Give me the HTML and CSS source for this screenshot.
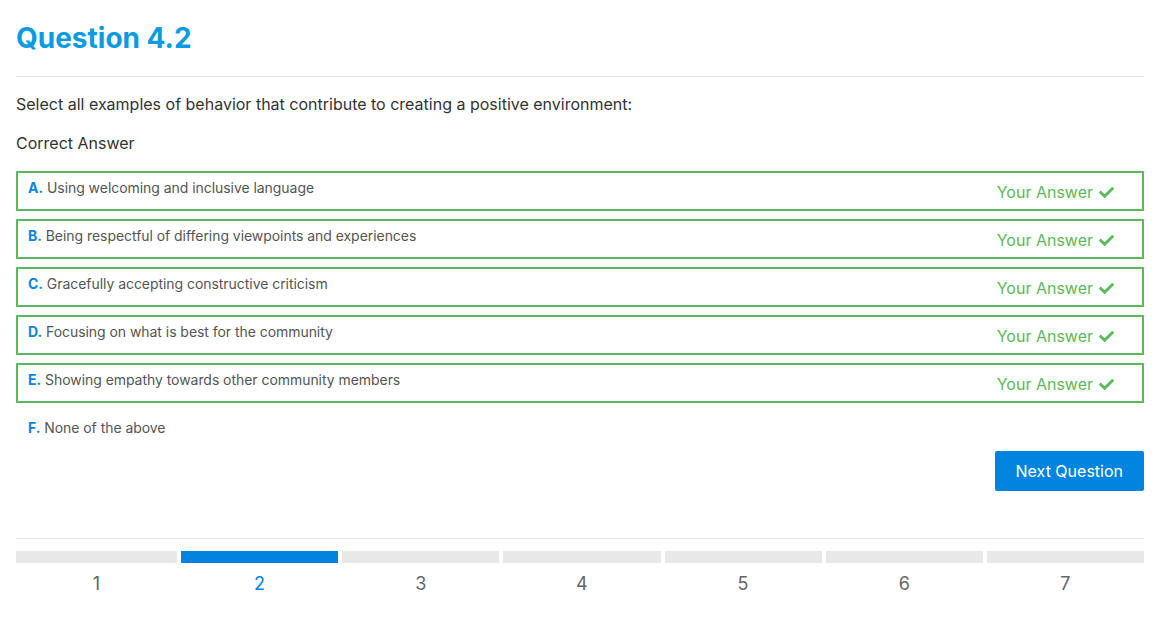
FILE: index.html
```html
<!DOCTYPE html>
<html lang="en">
<head>
<meta charset="utf-8">
<title>Question 4.2</title>
<link rel="stylesheet" href="styles.css">
</head>
<body>
<main class="page">
  <h1 class="title">Question 4.2</h1>
  <hr class="rule">
  <p class="prompt">Select all examples of behavior that contribute to creating a positive environment:</p>
  <p class="status">Correct Answer</p>
  <ul class="options">
    <li class="option selected"><span class="label"><b class="letter">A.</b> Using welcoming and inclusive language</span><span class="yours">Your Answer <svg class="check" viewBox="0 0 512 512" width="15" height="15"><path fill="currentColor" d="M173.9 439.4l-166.4-166.4c-10-10-10-26.2 0-36.2l36.2-36.2c10-10 26.2-10 36.2 0L192 312.7 432.1 72.6c10-10 26.2-10 36.2 0l36.2 36.2c10 10 10 26.2 0 36.2L210.1 439.4c-10 10-26.2 10-36.2 0z"/></svg></span></li>
    <li class="option selected"><span class="label"><b class="letter">B.</b> Being respectful of differing viewpoints and experiences</span><span class="yours">Your Answer <svg class="check" viewBox="0 0 512 512" width="15" height="15"><path fill="currentColor" d="M173.9 439.4l-166.4-166.4c-10-10-10-26.2 0-36.2l36.2-36.2c10-10 26.2-10 36.2 0L192 312.7 432.1 72.6c10-10 26.2-10 36.2 0l36.2 36.2c10 10 10 26.2 0 36.2L210.1 439.4c-10 10-26.2 10-36.2 0z"/></svg></span></li>
    <li class="option selected"><span class="label"><b class="letter">C.</b> Gracefully accepting constructive criticism</span><span class="yours">Your Answer <svg class="check" viewBox="0 0 512 512" width="15" height="15"><path fill="currentColor" d="M173.9 439.4l-166.4-166.4c-10-10-10-26.2 0-36.2l36.2-36.2c10-10 26.2-10 36.2 0L192 312.7 432.1 72.6c10-10 26.2-10 36.2 0l36.2 36.2c10 10 10 26.2 0 36.2L210.1 439.4c-10 10-26.2 10-36.2 0z"/></svg></span></li>
    <li class="option selected"><span class="label"><b class="letter">D.</b> Focusing on what is best for the community</span><span class="yours">Your Answer <svg class="check" viewBox="0 0 512 512" width="15" height="15"><path fill="currentColor" d="M173.9 439.4l-166.4-166.4c-10-10-10-26.2 0-36.2l36.2-36.2c10-10 26.2-10 36.2 0L192 312.7 432.1 72.6c10-10 26.2-10 36.2 0l36.2 36.2c10 10 10 26.2 0 36.2L210.1 439.4c-10 10-26.2 10-36.2 0z"/></svg></span></li>
    <li class="option selected"><span class="label"><b class="letter">E.</b> Showing empathy towards other community members</span><span class="yours">Your Answer <svg class="check" viewBox="0 0 512 512" width="15" height="15"><path fill="currentColor" d="M173.9 439.4l-166.4-166.4c-10-10-10-26.2 0-36.2l36.2-36.2c10-10 26.2-10 36.2 0L192 312.7 432.1 72.6c10-10 26.2-10 36.2 0l36.2 36.2c10 10 10 26.2 0 36.2L210.1 439.4c-10 10-26.2 10-36.2 0z"/></svg></span></li>
    <li class="option"><span class="label"><b class="letter">F.</b> None of the above</span></li>
  </ul>
  <div class="actions">
    <button class="next" type="button">Next Question</button>
  </div>
  <hr class="rule rule-bottom">
  <ol class="steps">
    <li class="step"><span class="bar"></span><span class="num">1</span></li>
    <li class="step active"><span class="bar"></span><span class="num">2</span></li>
    <li class="step"><span class="bar"></span><span class="num">3</span></li>
    <li class="step"><span class="bar"></span><span class="num">4</span></li>
    <li class="step"><span class="bar"></span><span class="num">5</span></li>
    <li class="step"><span class="bar"></span><span class="num">6</span></li>
    <li class="step"><span class="bar"></span><span class="num">7</span></li>
  </ol>
</main>
</body>
</html>
```

FILE: styles.css
```css
* { box-sizing: border-box; }

html, body {
  margin: 0;
  padding: 0;
  background: #ffffff;
}

body {
  font-family: Inter, "Noto Sans", "Liberation Sans", sans-serif;
  color: #333333;
}

.page {
  width: 1128px;
  margin-left: 16px;
  padding-top: 21px;
}

.title {
  margin: 0;
  font-size: 28px;
  line-height: 34px;
  font-weight: 700;
  color: #0b9be0;
}

.rule {
  border: 0;
  border-top: 1px solid #e6e6e6;
  margin: 21px 0 0 0;
  height: 0;
}

.prompt {
  margin: 15px 0 0 0;
  font-size: 16px;
  line-height: 24px;
  color: #333333;
}

.status {
  margin: 15px 0 0 0;
  font-size: 16px;
  line-height: 24px;
  color: #333333;
}

.options {
  list-style: none;
  margin: 16px 0 0 0;
  padding: 0;
}

.option {
  display: flex;
  justify-content: space-between;
  align-items: flex-start;
  height: 40px;
  margin-bottom: 8px;
  padding: 5px 28px 5px 10px;
  border: 2px solid transparent;
}

.option:last-child { margin-bottom: 0; }

.option.selected {
  border-color: #5cb85c;
}

.label {
  font-size: 14px;
  line-height: 20px;
  color: #555555;
  letter-spacing: -0.05px;
}

.letter {
  font-weight: 700;
  color: #0a84e0;
}

.yours {
  display: flex;
  align-items: center;
  gap: 6px;
  margin-top: 2px;
  font-size: 16px;
  line-height: 24px;
  color: #5cb85c;
}

.check {
  display: block;
}

.actions {
  display: flex;
  justify-content: flex-end;
}

.next {
  font-family: inherit;
  font-size: 16px;
  line-height: 24px;
  padding: 8px 21px;
  height: 40px;
  border: 0;
  border-radius: 2px;
  background: #0084e0;
  color: #ffffff;
}

.rule-bottom {
  margin-top: 47px;
}

.steps {
  list-style: none;
  margin: 12px 0 0 0;
  padding: 0;
  display: grid;
  grid-template-columns: 161px repeat(6, 1fr);
  column-gap: 4px;
}

.step {
  display: flex;
  flex-direction: column;
  align-items: center;
}

.bar {
  display: block;
  width: 100%;
  height: 12px;
  background: #e8e8e8;
}

.num {
  margin-top: 9px;
  font-size: 18px;
  line-height: 24px;
  color: #666666;
}

.step.active .bar { background: #0084e0; }
.step.active .num { color: #0084e0; }
```
